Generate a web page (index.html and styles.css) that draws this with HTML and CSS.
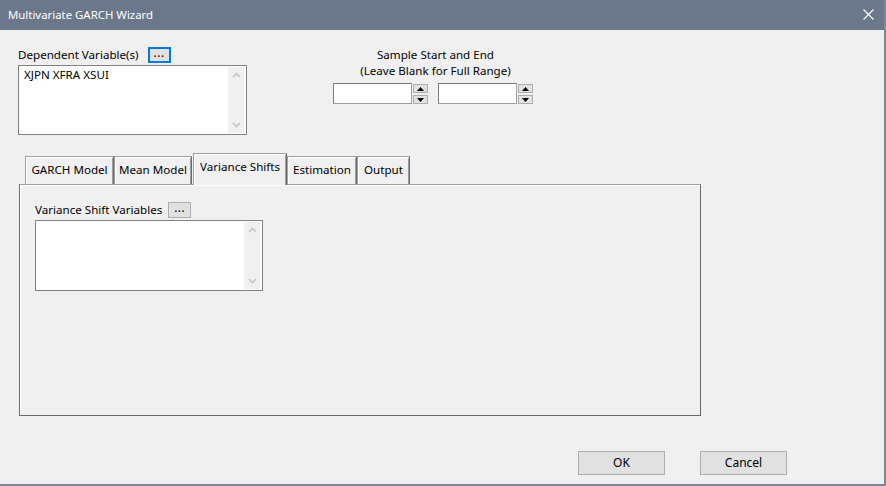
FILE: index.html
```html
<!DOCTYPE html>
<html>
<head>
<meta charset="utf-8">
<link rel="stylesheet" href="styles.css">
</head>
<body>
<div class="dialog">
  <div class="titlebar">
    <span class="title">Multivariate GARCH Wizard</span>
    <svg class="close" width="11" height="11" viewBox="0 0 11 11"><path d="M0.5 0.5 L10.5 10.5 M10.5 0.5 L0.5 10.5" stroke="#fff" stroke-width="1.2" fill="none"/></svg>
  </div>
  <div class="body">
    <div class="top">
      <div class="dep">
        <div class="labelrow">
          <span class="label">Dependent Variable(s)</span>
          <div class="dots focused">...</div>
        </div>
        <div class="listbox dep-list">
          <div class="list-text">XJPN XFRA XSUI</div>
          <div class="vscroll">
            <svg width="9" height="6" viewBox="0 0 9 6"><path d="M1 5 L4.5 1.5 L8 5" stroke="#c4c4c4" stroke-width="1.6" fill="none"/></svg>
            <svg width="9" height="6" viewBox="0 0 9 6"><path d="M1 1 L4.5 4.5 L8 1" stroke="#c4c4c4" stroke-width="1.6" fill="none"/></svg>
          </div>
        </div>
      </div>
      <div class="sample">
        <div class="sample-title">Sample Start and End<br>(Leave Blank for Full Range)</div>
        <div class="spins">
          <div class="spin">
            <div class="spin-input"></div>
            <div class="spin-btns">
              <div class="sb"><svg width="7" height="4" viewBox="0 0 7 4"><path d="M0 4 L3.5 0 L7 4Z" fill="#000"/></svg></div>
              <div class="sb"><svg width="7" height="4" viewBox="0 0 7 4"><path d="M0 0 L3.5 4 L7 0Z" fill="#000"/></svg></div>
            </div>
          </div>
          <div class="spin">
            <div class="spin-input"></div>
            <div class="spin-btns">
              <div class="sb"><svg width="7" height="4" viewBox="0 0 7 4"><path d="M0 4 L3.5 0 L7 4Z" fill="#000"/></svg></div>
              <div class="sb"><svg width="7" height="4" viewBox="0 0 7 4"><path d="M0 0 L3.5 4 L7 0Z" fill="#000"/></svg></div>
            </div>
          </div>
        </div>
      </div>
    </div>

    <div class="tabs">
      <div class="tabstrip">
        <div class="tab t1">GARCH Model</div>
        <div class="tab t2">Mean Model</div>
        <div class="tab active t3">Variance Shifts</div>
        <div class="tab t4">Estimation</div>
        <div class="tab t5">Output</div>
      </div>
      <div class="panel">
        <div class="labelrow">
          <span class="label">Variance Shift Variables</span>
          <div class="dots">...</div>
        </div>
        <div class="listbox vs-list">
          <div class="list-text"></div>
          <div class="vscroll">
            <svg width="9" height="6" viewBox="0 0 9 6"><path d="M1 5 L4.5 1.5 L8 5" stroke="#c4c4c4" stroke-width="1.6" fill="none"/></svg>
            <svg width="9" height="6" viewBox="0 0 9 6"><path d="M1 1 L4.5 4.5 L8 1" stroke="#c4c4c4" stroke-width="1.6" fill="none"/></svg>
          </div>
        </div>
      </div>
    </div>

    <div class="footer">
      <div class="btn">OK</div>
      <div class="btn">Cancel</div>
    </div>
  </div>
</div>
</body>
</html>
```

FILE: styles.css
```css
* { box-sizing: border-box; }
html, body { margin: 0; padding: 0; background: #f0f0f0; }
body { width: 886px; height: 486px; overflow: hidden; }

.dialog {
  width: 886px;
  height: 486px;
  background: #f0f0f0;
  border-right: 2px solid #7b8799;
  border-bottom: 2px solid #7b8799;
  display: flex;
  flex-direction: column;
  font-family: "Noto Sans", "DejaVu Sans", sans-serif;
  font-size: 11.6px;
  color: #000;
}

.titlebar {
  height: 30px;
  flex: none;
  background: #6b788b;
  display: flex;
  align-items: center;
  justify-content: space-between;
  padding: 0 10px 0 8px;
}
.title {
  font-family: "Noto Sans", sans-serif;
  font-size: 11.4px;
  color: #fff;
  margin-top: -1px;
}
.close { display: block; margin-top: -1px; }

.body {
  flex: 1;
  display: flex;
  flex-direction: column;
  padding: 17px 0 0 18px;
}

.top {
  display: flex;
  align-items: flex-start;
}
.dep { width: 229px; }
.labelrow {
  display: flex;
  align-items: center;
  height: 16px;
}
.label { line-height: 16px; }
.dots {
  width: 23px;
  height: 16px;
  margin-left: 6px;
  background: #e1e1e1;
  border: 1px solid #adadad;
  font-size: 12px;
  line-height: 10px;
  text-align: center;
  letter-spacing: 0.5px;
}
.dots.focused {
  border: 2px solid #0078d7;
  line-height: 8px;
  margin-left: 9px;
}

.listbox {
  display: flex;
  background: #fff;
  border: 1px solid #828282;
  padding: 1px;
}
.dep-list { width: 229px; height: 70px; margin-top: 2px; }
.list-text { flex: 1; padding: 1px 0 0 4px; line-height: 14px; }
.vscroll {
  width: 16px;
  margin-right: 1px;
  background: #f0f0f0;
  display: flex;
  flex-direction: column;
  justify-content: space-between;
  align-items: center;
  padding: 5px 0 5px;
}
.vscroll svg { display: block; }

.sample {
  margin-left: 86px;
  width: 199px;
}
.sample-title {
  text-align: center;
  line-height: 16px;
  padding-left: 6px;
}
.spins {
  display: flex;
  margin-top: 4px;
  gap: 10px;
}
.spin { display: flex; }
.spin-input {
  width: 79px;
  height: 21px;
  background: #fff;
  border: 1px solid #a0a0a0;
  border-top-color: #7a7a7a;
  border-left-color: #7a7a7a;
}
.spin-btns {
  display: flex;
  flex-direction: column;
  gap: 2px;
  margin-left: 1px;
  padding-top: 1px;
}
.sb {
  width: 15px;
  height: 9px;
  background: #e1e1e1;
  border: 1px solid #adadad;
  display: flex;
  align-items: center;
  justify-content: center;
}
.sb svg { display: block; }

.tabs {
  margin-top: 18px;
  margin-left: 1px;
  width: 682px;
}
.tabstrip {
  display: flex;
  align-items: flex-end;
  height: 31px;
  padding-left: 6px;
  position: relative;
  z-index: 1;
}
.tab {
  height: 28px;
  padding: 0;
  text-align: center;
  line-height: 26px;
  white-space: nowrap;
  background: #f0f0f0;
  border-top: 1px solid #a0a0a0;
  border-left: 1px solid #a0a0a0;
  border-right: 1px solid #696969;
  box-shadow: inset 1px 1px 0 #fff, inset -1px 0 0 #a0a0a0;
}
.tab.active {
  height: 32px;
  margin-bottom: -1px;
  line-height: 26px;
  margin-left: 1px;
}
.t1 { width: 89px; }
.t2 { width: 78px; }
.t3 { width: 94px; }
.t4 { width: 70px; }
.t5 { width: 53px; }

.panel {
  height: 232px;
  border: 1px solid #696969;
  border-top-color: #a0a0a0;
  border-left-color: #6d6d6d;
  box-shadow: inset 1px 1px 0 #fff;
  padding: 17px 0 0 15px;
}
.vs-list { width: 228px; height: 71px; margin-top: 2px; }

.footer {
  display: flex;
  justify-content: flex-end;
  gap: 35px;
  margin-top: 35px;
  padding-right: 97px;
}
.btn {
  width: 87px;
  height: 24px;
  background: #e1e1e1;
  border: 1px solid #adadad;
  text-align: center;
  line-height: 22px;
  font-size: 12px;
}
```
